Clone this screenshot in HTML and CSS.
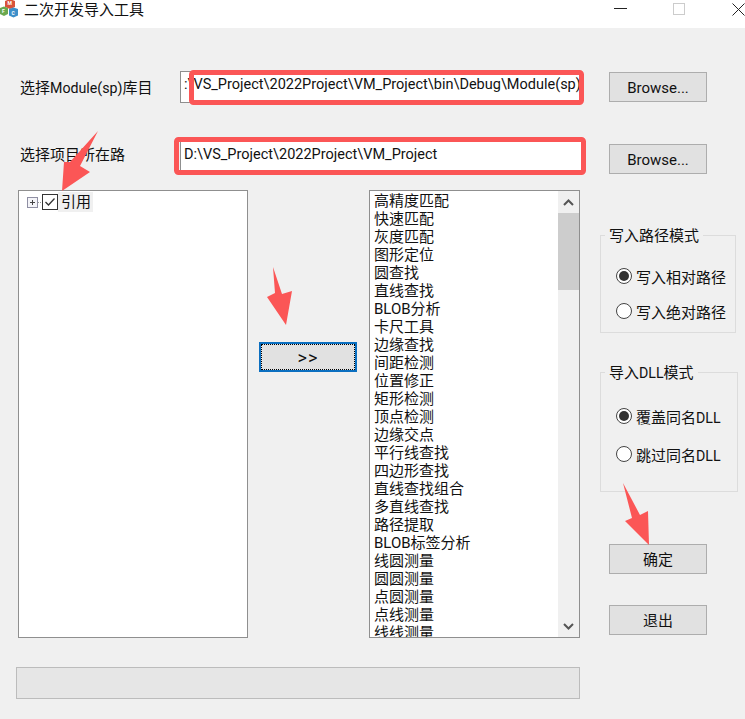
FILE: index.html
```html
<!DOCTYPE html>
<html lang="zh-CN">

<head>
    <meta charset="UTF-8" />
    <title>二次开发导入工具</title>
    <link rel="stylesheet" href="styles.css">
</head>

<body>
    <div class="window">
        <div class="titlebar">
            <svg class="app-icon" width="18" height="18" viewBox="0 0 18 18">
                <path d="M5 1l5-2 5 2v6l-5 2-5-2z" fill="#d9533a" />
                <path d="M0 8l4-1.500 4 1.500v6l-4 2-4-2z" fill="#6aa84f" />
                <path d="M9 9l4.500-1.500 4.500 1.500v6.500l-4.500 2-4.500-2z" fill="#3d8fc9" />
                <text x="7.500" y="5" class="app-icon-letter">M</text>
                <text x="2" y="13" class="app-icon-letter">F</text>
                <text x="11.500" y="15" class="app-icon-letter">C</text>
            </svg>
            <div class="app-title">二次开发导入工具</div>
            <div class="window-buttons">
                <svg class="win-min" width="13" height="13" viewBox="0 0 13 13"><path d="M0 5.500h13" stroke="#222" /></svg>
                <svg class="win-max" width="13" height="13" viewBox="0 0 13 13"><rect x="0.500" y="0.500" width="11" height="11" fill="none" stroke="#ccc" /></svg>
                <svg class="win-close" width="13" height="13" viewBox="0 0 13 13"><path d="M0.500 0.500l12 12M12.500 0.500l-12 12" stroke="#222" /></svg>
            </div>
        </div>

        <div class="row row-module">
            <div class="row-label">选择<span class="latin">Module(sp)</span>库目</div>
            <div class="path-box">:\VS_Project\2022Project\VM_Project\bin\Debug\Module(sp)</div>
            <button class="btn row-btn">Browse...</button>
        </div>

        <div class="row row-project">
            <div class="row-label">选择项目所在路</div>
            <div class="path-box">D:\VS_Project\2022Project\VM_Project</div>
            <button class="btn row-btn">Browse...</button>
        </div>

        <div class="panes">
            <div class="tree">
                <div class="tree-node">
                    <svg class="tree-expander" width="15" height="11" viewBox="0 0 15 11">
                        <rect x="0.500" y="0.500" width="10" height="10" fill="#f4f4f8" stroke="#8f8fa3" />
                        <path d="M3 5.500h5M5.500 3v5" stroke="#444" />
                        <path d="M11 5.500h4" stroke="#999" stroke-dasharray="1 1" />
                    </svg>
                    <svg class="tree-check" width="16" height="16" viewBox="0 0 16 16">
                        <rect x="0.500" y="0.500" width="15" height="15" fill="#fff" stroke="#333" />
                        <path d="M3.500 8l3 3 6-6.500" fill="none" stroke="#333" stroke-width="1.300" />
                    </svg>
                    <span class="tree-label">引用</span>
                </div>
            </div>

            <div class="middle">
                <button class="btn btn-focus">&gt;&gt;</button>
            </div>

            <div class="list">
                <div class="list-items">
                    <div>高精度匹配</div>
                    <div>快速匹配</div>
                    <div>灰度匹配</div>
                    <div>图形定位</div>
                    <div>圆查找</div>
                    <div>直线查找</div>
                    <div>BLOB分析</div>
                    <div>卡尺工具</div>
                    <div>边缘查找</div>
                    <div>间距检测</div>
                    <div>位置修正</div>
                    <div>矩形检测</div>
                    <div>顶点检测</div>
                    <div>边缘交点</div>
                    <div>平行线查找</div>
                    <div>四边形查找</div>
                    <div>直线查找组合</div>
                    <div>多直线查找</div>
                    <div>路径提取</div>
                    <div>BLOB标签分析</div>
                    <div>线圆测量</div>
                    <div>圆圆测量</div>
                    <div>点圆测量</div>
                    <div>点线测量</div>
                    <div>线线测量</div>
                </div>
                <div class="scrollbar">
                    <svg class="scroll-btn" width="21" height="22" viewBox="0 0 21 22"><path d="M6 14l4.500-4.500 4.500 4.500" fill="none" stroke="#555" stroke-width="2" /></svg>
                    <div class="scroll-thumb"></div>
                    <svg class="scroll-btn scroll-btn-down" width="21" height="22" viewBox="0 0 21 22"><path d="M6 9l4.500 4.500 4.500-4.500" fill="none" stroke="#555" stroke-width="2" /></svg>
                </div>
            </div>

            <div class="side">
                <div class="group group-path">
                    <div class="group-title">写入路径模式</div>
                    <div class="radio-row">
                        <span class="radio checked"></span>
                        <span>写入相对路径</span>
                    </div>
                    <div class="radio-row">
                        <span class="radio"></span>
                        <span>写入绝对路径</span>
                    </div>
                </div>

                <div class="group group-dll">
                    <div class="group-title">导入<span class="latin">DLL</span>模式</div>
                    <div class="radio-row">
                        <span class="radio checked"></span>
                        <span>覆盖同名<span class="latin">DLL</span></span>
                    </div>
                    <div class="radio-row">
                        <span class="radio"></span>
                        <span>跳过同名<span class="latin">DLL</span></span>
                    </div>
                </div>

                <button class="btn side-btn btn-ok">确定</button>
                <button class="btn side-btn btn-exit">退出</button>
            </div>
        </div>

        <div class="progress"></div>

        <!-- red marks drawn over the screenshot -->
        <svg class="marks" width="745" height="719" viewBox="0 0 745 719">
            <rect x="191.500" y="72.500" width="390" height="30" rx="2" />
            <rect x="176.500" y="139.500" width="407" height="33" rx="2" />
            <polygon points="98,131 80,166 90,172 62,191 64,162 70,162" />
            <polygon points="273,267 282,294 292,291 286,325 267,297 275,293" />
            <polygon points="623,483 640,515 648,511 649,545 625,521 632,518" />
        </svg>
    </div>
</body>

</html>
```

FILE: styles.css
```css
html,
body {
    margin: 0;
    padding: 0;
    background-color: #f0f0f0;
    color: #111;
    font-family: "Roboto", "Noto Sans CJK SC", sans-serif;
    font-size: 15px;
    overflow: hidden;
}

.window {
    position: relative;
    width: 745px;
    height: 719px;
}

.latin {
    font-size: 14.2px;
}

.titlebar {
    display: flex;
    align-items: flex-start;
    height: 28px;
    background-color: #fff;
}

.app-icon {
    flex: none;
}

.app-icon-letter {
    font-size: 5px;
    font-weight: bold;
    fill: #fff;
}

.app-title {
    margin-left: 6px;
    line-height: 20px;
}

.window-buttons {
    display: flex;
    margin-left: auto;
    padding-top: 3px;
}

.win-min {
    margin-right: 46px;
}

.win-max {
    margin-right: 46px;
}

.row {
    display: flex;
    align-items: flex-start;
    height: 32px;
    padding-left: 20px;
}

.row-module {
    margin-top: 43px;
}

.row-project {
    margin-top: 38px;
}

.row-label {
    width: 160px;
    line-height: 20px;
}

.row-module .row-label {
    margin-top: 7px;
}

.row-project .row-label {
    margin-top: 4px;
}

.path-box {
    box-sizing: border-box;
    width: 402px;
    height: 32px;
    padding: 3px 0 0 3px;
    border: 1px solid #8f8f8f;
    background-color: #fff;
    font-size: 14.5px;
    line-height: 20px;
    white-space: nowrap;
    overflow: hidden;
}

.btn {
    box-sizing: border-box;
    display: block;
    width: 98px;
    height: 30px;
    padding: 0;
    border: 1px solid #adadad;
    background-color: #e1e1e1;
    color: #111;
    font-family: inherit;
    font-size: 15px;
}

.row-btn {
    margin-left: 27px;
    padding-top: 2px;
}

.row-module .row-btn {
    margin-top: 1px;
}

.row-project .row-btn {
    margin-top: 3px;
}

.panes {
    display: flex;
    align-items: flex-start;
    height: 448px;
    margin-top: 17px;
    padding-left: 18px;
}

.tree {
    box-sizing: border-box;
    width: 230px;
    height: 448px;
    padding: 1px 0 0 8px;
    border: 1px solid #8f8f8f;
    background-color: #fff;
}

.tree-node {
    display: flex;
    align-items: center;
    height: 20px;
}

.tree-label {
    padding: 0 2px 0 3px;
    background-color: #f0f0f0;
    line-height: 20px;
}

.middle {
    box-sizing: border-box;
    width: 121px;
    padding: 152px 0 0 11px;
}

.btn-focus {
    border: 2px solid #0b6fc0;
    outline: 1px dotted #000;
    outline-offset: -3px;
    font-size: 18px;
    letter-spacing: 1px;
}

.list {
    box-sizing: border-box;
    display: flex;
    width: 211px;
    height: 448px;
    border: 1px solid #8f8f8f;
    background-color: #fff;
}

.list-items {
    box-sizing: border-box;
    flex: 1;
    height: 446px;
    padding: 1px 0 0 4px;
    overflow: hidden;
    line-height: 18px;
}

.scrollbar {
    display: flex;
    flex-direction: column;
    flex: none;
    width: 21px;
    height: 446px;
    background-color: #f0f0f0;
}

.scroll-thumb {
    height: 77px;
    background-color: #cdcdcd;
}

.scroll-btn-down {
    margin-top: auto;
}

.side {
    padding: 45px 0 0 20px;
}

.group {
    box-sizing: border-box;
    border: 1px solid #dcdcdc;
    padding-left: 15px;
}

.group-path {
    width: 136px;
    height: 98px;
}

.group-dll {
    width: 138px;
    height: 120px;
    margin-top: 39px;
}

.group-title {
    width: fit-content;
    margin: -10px 0 0 -11px;
    padding: 0 4px;
    background-color: #f0f0f0;
    line-height: 20px;
}

.radio-row {
    display: flex;
    align-items: center;
    gap: 4px;
    height: 20px;
    white-space: nowrap;
}

.group-path .radio-row {
    margin-top: 15px;
}

.group-path .radio-row:nth-child(2) {
    margin-top: 20px;
}

.group-dll .radio-row {
    margin-top: 18px;
}

.group-dll .radio-row:nth-child(2) {
    margin-top: 23px;
}

.radio {
    box-sizing: border-box;
    display: flex;
    align-items: center;
    justify-content: center;
    flex: none;
    width: 16px;
    height: 16px;
    border: 1px solid #444;
    border-radius: 50%;
    background-color: #fff;
}

.radio.checked::after {
    content: "";
    width: 10px;
    height: 10px;
    border-radius: 50%;
    background-color: #333;
}

.side-btn {
    margin-left: 9px;
    padding-bottom: 2px;
}

.btn-ok {
    margin-top: 52px;
}

.btn-exit {
    margin-top: 31px;
}

.progress {
    box-sizing: border-box;
    width: 564px;
    height: 32px;
    margin: 29px 0 0 16px;
    border: 1px solid #bcbcbc;
    background-color: #e6e6e6;
}

.marks {
    position: absolute;
    top: 0;
    left: 0;
    pointer-events: none;
}

.marks rect {
    fill: none;
    stroke: #fb5656;
    stroke-width: 5;
}

.marks polygon {
    fill: #fb5656;
}
```
